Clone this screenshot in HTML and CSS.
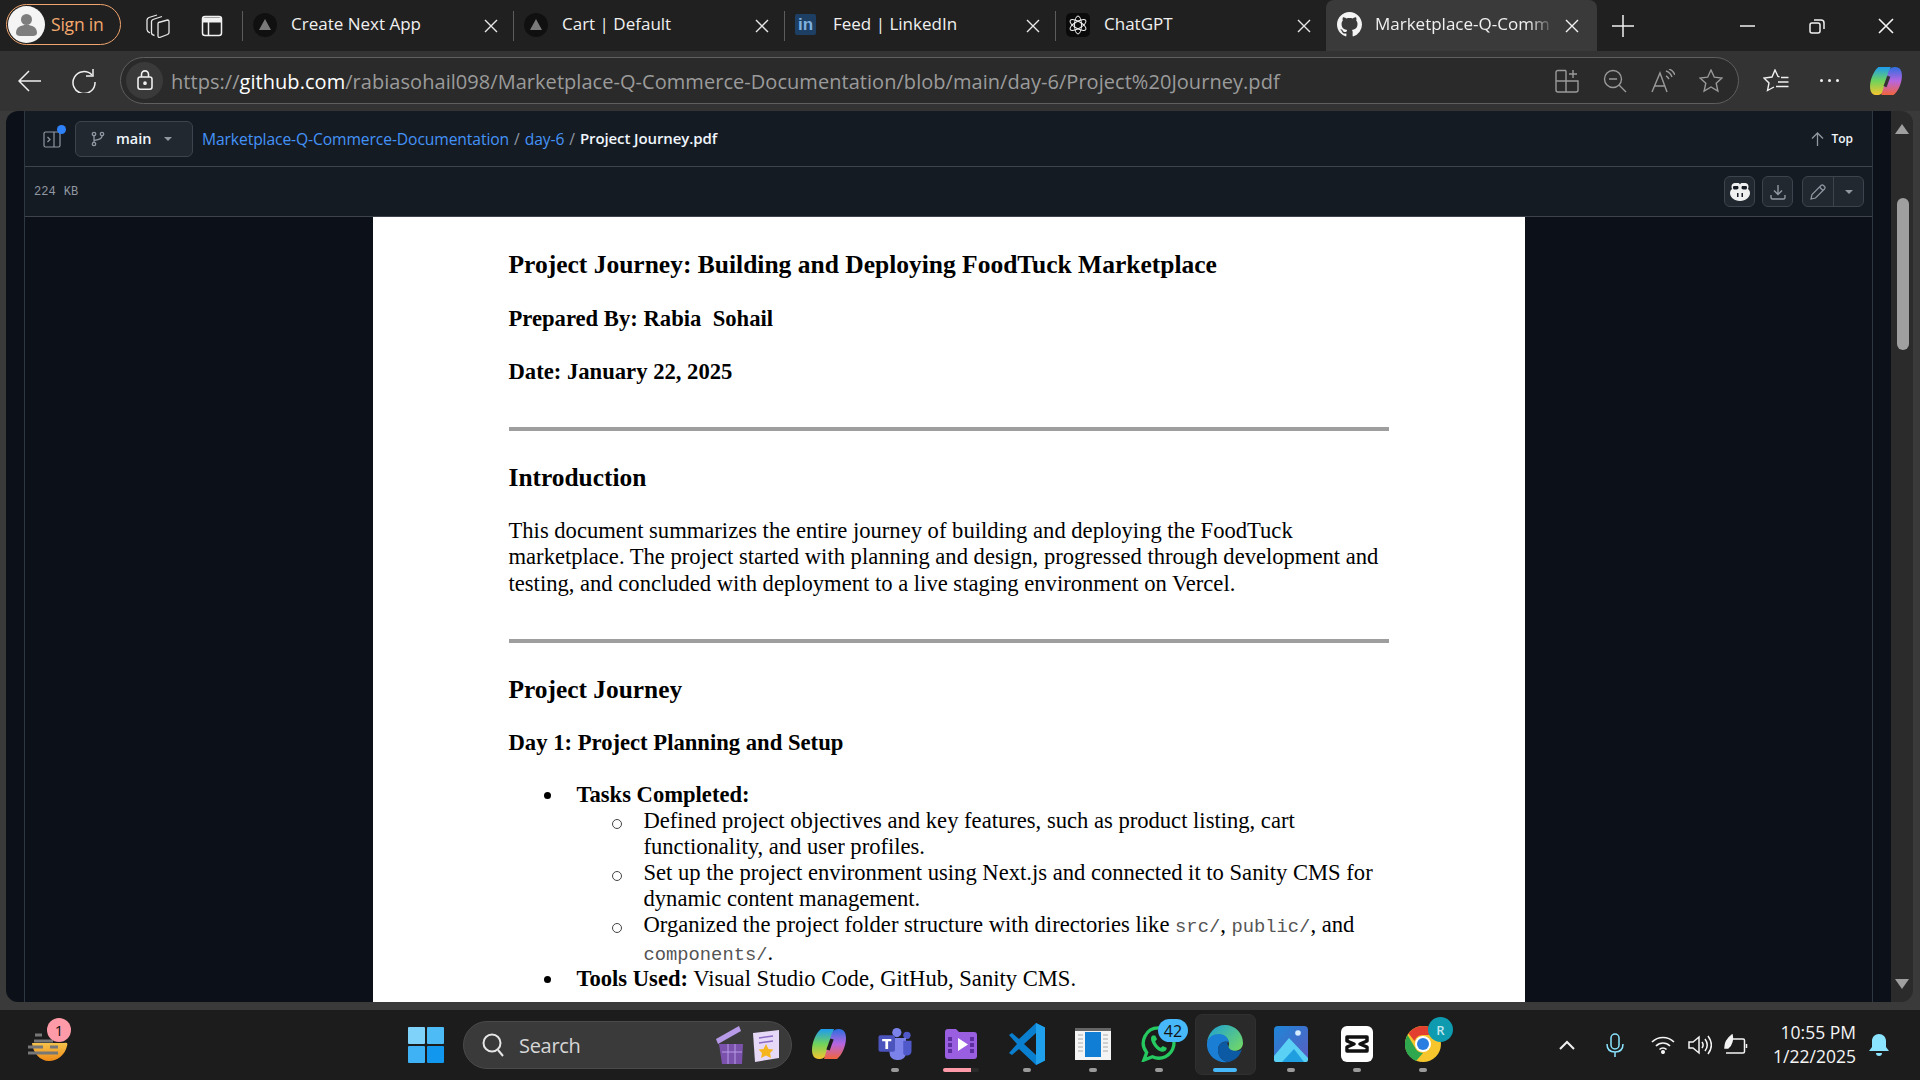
FILE: index.html
```html
<!DOCTYPE html>
<html>

	<head>
		<meta charset="UTF-8">
		<title>Project Journey.pdf</title>
		<link rel="stylesheet" href="styles.css">
	</head>

	<body>
		<svg class="defs" width="0" height="0">
			<defs>
				<linearGradient id="copilotA" x1="0" y1="0" x2="0" y2="1">
					<stop offset="0" stop-color="#1d9bf0" />
					<stop offset="0.5" stop-color="#6fd35a" />
					<stop offset="1" stop-color="#f7c52f" />
				</linearGradient>
				<linearGradient id="copilotB" x1="0" y1="0" x2="0" y2="1">
					<stop offset="0" stop-color="#2b6fe0" />
					<stop offset="0.5" stop-color="#b765e0" />
					<stop offset="1" stop-color="#f2643c" />
				</linearGradient>
				<linearGradient id="edgeA" x1="0" y1="0" x2="1" y2="0.8">
					<stop offset="0" stop-color="#1b9ed8" />
					<stop offset="1" stop-color="#6fd66a" />
				</linearGradient>
				<linearGradient id="photoA" x1="0" y1="0" x2="1" y2="1">
					<stop offset="0" stop-color="#1e86d8" />
					<stop offset="1" stop-color="#5b5cc0" />
				</linearGradient>
				<linearGradient id="bowl" x1="0" y1="0" x2="0" y2="1">
					<stop offset="0" stop-color="#f5c44c" />
					<stop offset="1" stop-color="#ee8a17" />
				</linearGradient>
			</defs>
		</svg>

		<div class="tabstrip">
			<div class="signin">
				<span class="avatar">
					<svg width="37" height="37" viewBox="0 0 37 37"><circle cx="18.5" cy="13.5" r="5.5" fill="#7d7d7d" /><path d="M8 27c0-6 5-8 10.500-8S29 21 29 27c0 2-2 3-4 3H12c-2 0-4-1-4-3z" fill="#7d7d7d" /></svg>
				</span>
				<span class="signin-text">Sign in</span>
			</div>
			<svg class="strip-icon workspaces" width="24" height="24" viewBox="0 0 24 24" fill="none" stroke="#e6e6e6" stroke-width="1.300"><path d="M12.500 8.500L21.500 6c1 0 1.500.5 1.500 1.500v11c0 1-.5 1.500-1.500 2l-8 3c-1 0-1.500-.5-1.500-1.500V10c0-.7.200-1.200.500-1.500z" /><path d="M8.500 21.500C6.500 21 5.500 20 5.500 19V7.500C5.500 6.500 6 6 7 5.500L16 2.500" /><path d="M4 19C2 18 1 17 1 15.500V6c0-1.500 1-2 2-2.500L11 1" /></svg>
			<svg class="strip-icon sidebar-tabs" width="24" height="24" viewBox="0 0 24 24" fill="none" stroke="#f0f0f0" stroke-width="1.500"><rect x="2.500" y="2.500" width="19" height="19" rx="2.500" /><path d="M2.500 6h19" stroke-width="5" /><path d="M8.500 8v13.500" /></svg>

			<div class="tab">
				<span class="fav-circle"><i class="tri"></i></span>
				<span class="tab-title">Create Next App</span>
				<svg class="tab-close" width="14" height="14" viewBox="0 0 14 14"><path d="M1 1l12 12M13 1L1 13" stroke="#e8e8e8" stroke-width="1.400" /></svg>
			</div>
			<div class="tab">
				<span class="fav-circle"><i class="tri"></i></span>
				<span class="tab-title">Cart | Default</span>
				<svg class="tab-close" width="14" height="14" viewBox="0 0 14 14"><path d="M1 1l12 12M13 1L1 13" stroke="#e8e8e8" stroke-width="1.400" /></svg>
			</div>
			<div class="tab">
				<span class="fav-in">in</span>
				<span class="tab-title">Feed | LinkedIn</span>
				<svg class="tab-close" width="14" height="14" viewBox="0 0 14 14"><path d="M1 1l12 12M13 1L1 13" stroke="#e8e8e8" stroke-width="1.400" /></svg>
			</div>
			<div class="tab">
				<span class="fav-gpt">
					<svg width="20" height="20" viewBox="0 0 20 20" fill="none" stroke="#f2f2f2" stroke-width="1"><ellipse cx="10" cy="10" rx="3.500" ry="9" /><ellipse cx="10" cy="10" rx="3.500" ry="9" transform="rotate(60 10 10)" /><ellipse cx="10" cy="10" rx="3.500" ry="9" transform="rotate(120 10 10)" /></svg>
				</span>
				<span class="tab-title">ChatGPT</span>
				<svg class="tab-close" width="14" height="14" viewBox="0 0 14 14"><path d="M1 1l12 12M13 1L1 13" stroke="#e8e8e8" stroke-width="1.400" /></svg>
			</div>
			<div class="tab tab-active">
				<svg class="fav-gh" width="25" height="25" viewBox="0 0 16 16"><path fill="#f4f4f4" d="M8 0C3.580 0 0 3.580 0 8c0 3.540 2.290 6.530 5.470 7.590.4.070.55-.17.55-.38 0-.19-.01-.82-.01-1.490-2.010.37-2.530-.49-2.690-.94-.09-.23-.48-.94-.82-1.130-.28-.15-.68-.52-.01-.53.630-.01 1.080.58 1.230.82.720 1.210 1.870.87 2.330.66.070-.52.280-.87.510-1.070-1.780-.2-3.640-.89-3.640-3.950 0-.87.310-1.590.820-2.150-.08-.2-.36-1.020.08-2.120 0 0 .67-.21 2.200.82.640-.18 1.320-.27 2-.27s1.360.09 2 .27c1.530-1.040 2.200-.82 2.200-.82.440 1.100.160 1.920.080 2.120.510.560.820 1.270.820 2.150 0 3.070-1.870 3.750-3.650 3.950.290.250.540.730.540 1.480 0 1.070-.01 1.930-.01 2.200 0 .210.150.460.550.380A8.010 8.010 0 0016 8c0-4.420-3.580-8-8-8z" /></svg>
				<span class="tab-title tab-title-fade">Marketplace-Q-Comm</span>
				<svg class="tab-close" width="14" height="14" viewBox="0 0 14 14"><path d="M1 1l12 12M13 1L1 13" stroke="#f4f4f4" stroke-width="1.400" /></svg>
			</div>
			<svg class="new-tab" width="22" height="22" viewBox="0 0 22 22"><path d="M11 0v22M0 11h22" stroke="#f0f0f0" stroke-width="1.500" /></svg>

			<div class="win-controls">
				<div class="win-btn"><svg width="16" height="16" viewBox="0 0 16 16"><path d="M0 8h15" stroke="#f0f0f0" stroke-width="1.500" /></svg></div>
				<div class="win-btn"><svg width="16" height="16" viewBox="0 0 16 16" fill="none" stroke="#f0f0f0" stroke-width="1.500"><rect x="1" y="5" width="10" height="10" rx="2" /><path d="M5 2h7c1.500 0 3 1 3 3v6" /></svg></div>
				<div class="win-btn"><svg width="16" height="16" viewBox="0 0 16 16"><path d="M1 1l14 14M15 1L1 15" stroke="#f4f4f4" stroke-width="1.600" /></svg></div>
			</div>
		</div>

		<div class="toolbar">
			<svg class="tool-back" width="24" height="24" viewBox="0 0 24 24" fill="none" stroke="#f0f0f0" stroke-width="1.500"><path d="M23 12H1M11 2L1 12l10 10" /></svg>
			<svg class="tool-reload" width="24" height="24" viewBox="0 0 24 24" fill="none" stroke="#f0f0f0" stroke-width="1.500"><path d="M20 6a11 11 0 1 0 3 7" /><path d="M21 0v7h-7" /></svg>
			<div class="omnibox">
				<span class="lock">
					<svg width="18" height="21" viewBox="0 0 20 24" fill="none" stroke="#f0f0f0" stroke-width="1.800"><rect x="2" y="8" width="16" height="14" rx="2.500" /><path d="M6 8V5a4 4 0 0 1 8 0v3" /><circle cx="10" cy="15" r="1.200" fill="#f0f0f0" /></svg>
				</span>
				<span class="url">https://<b>github.com</b>/rabiasohail098/Marketplace-Q-Commerce-Documentation/blob/main/day-6/Project%20Journey.pdf</span>
				<div class="omni-icons">
					<svg width="24" height="24" viewBox="0 0 24 24" fill="none" stroke="#9a9a9a" stroke-width="1.400"><path d="M11 1.500H3a2 2 0 0 0-2 2V21a2 2 0 0 0 2 2h18a2 2 0 0 0 2-2V12H1M11 1.500V23M18 1v8M14 5h8" /></svg>
					<svg width="24" height="24" viewBox="0 0 24 24" fill="none" stroke="#9a9a9a" stroke-width="1.400"><circle cx="10" cy="10" r="8.500" /><path d="M16 16l7 7M6 10h8" /></svg>
					<svg width="24" height="24" viewBox="0 0 24 24" fill="none" stroke="#9a9a9a" stroke-width="1.400"><path d="M1 23L9 4l7 19M4 17h10" /><path d="M15 2c3 1 5 3 6 6M15 7c1.500.5 2 1.500 3 3M18 0c3 1 5 3.500 6 6" /></svg>
					<svg width="24" height="24" viewBox="0 0 24 24" fill="none" stroke="#9a9a9a" stroke-width="1.400"><path d="M12 1l3.300 7.200 7.700.8-5.800 5.200 1.700 7.800L12 18l-6.900 4 1.700-7.800L1 9l7.700-.8z" /></svg>
				</div>
			</div>
			<svg class="tool-favs" width="26" height="24" viewBox="0 0 26 24" fill="none" stroke="#f0f0f0" stroke-width="1.400"><path d="M16.500 7.800L15 7.500 12 1 9 8 1 9l5 5-1.500 7.500L11 18" /><path d="M18 8.500h7.500M15 13h10.500M13 17.500h12.500" /></svg>
			<div class="tool-dots"><i></i><i></i><i></i></div>
			<svg class="tool-copilot" width="32" height="30" viewBox="0 0 34 32"><path d="M9 1h13l-7 23c-1 4-3 7-7 7H7C2 31 0 27 0 22 0 14 4 5 9 1z" fill="url(#copilotA)" /><path d="M25 31H12l7-23c1-4 3-7 7-7h1c5 0 7 4 7 9 0 8-4 17-9 21z" fill="url(#copilotB)" /><path d="M20 11l-4 11" stroke="#333" stroke-width="3.500" /></svg>
		</div>

		<div class="content">
			<div class="page">
				<div class="file">
					<div class="file-head">
						<div class="side-toggle">
							<svg width="18" height="18" viewBox="0 0 18 18" fill="none" stroke="#9198a1" stroke-width="1.200"><rect x="1" y="2" width="16" height="15" rx="1.500" /><path d="M11 2v15M4.500 7l2.500 2.500L4.500 12" /></svg>
							<i class="side-dot"></i>
						</div>
						<div class="branch">
							<svg width="14" height="16" viewBox="0 0 14 16" fill="none" stroke="#9198a1" stroke-width="1.300"><circle cx="3" cy="3" r="1.700" /><circle cx="3" cy="13" r="1.700" /><circle cx="11" cy="3" r="1.700" /><path d="M3 5v6M11 5c0 3-3 3.500-8 4.500" /></svg>
							<span class="branch-name">main</span>
							<i class="caret"></i>
						</div>
						<div class="crumbs">
							<a>Marketplace-Q-Commerce-Documentation</a>
							<span class="crumb-sep">/</span>
							<a>day-6</a>
							<span class="crumb-sep">/</span>
							<strong>Project Journey.pdf</strong>
						</div>
						<div class="top-link">
							<svg width="13" height="14" viewBox="0 0 13 14" fill="none" stroke="#9198a1" stroke-width="1.300"><path d="M6.500 14V1M1 6.500L6.500 1 12 6.500" /></svg>
							<span>Top</span>
						</div>
					</div>
					<div class="file-bar">
						<span class="file-size">224 KB</span>
						<div class="file-actions">
							<div class="icon-btn">
								<svg width="20" height="18" viewBox="0 0 20 18"><path fill="#f0f0f0" d="M5 0h3c1 0 1.500.5 2 1.500C10.500.5 11 0 12 0h3c2 0 3.500 1.500 3.500 3.500 0 1-.2 2-.5 2.500 1 .8 2 2 2 4 0 4-4 8-10 8S0 14 0 10c0-2 1-3.200 2-4-.3-.5-.5-1.500-.5-2.500C1.500 1.500 3 0 5 0z" /><path fill="#151b23" d="M4 3h3.500c.5 0 1 .5 1 1.500S8 6.500 6.500 6.500H4C3.500 6.500 3 5.500 3 4.500S3.500 3 4 3zM12.500 3H16c.5 0 1 .5 1 1.500s-.5 2-1 2h-2.500C12 6.500 11.500 5.500 11.500 4.500S12 3 12.500 3zM7 10h1.500v4H7zM11.500 10H13v4h-1.500z" /></svg>
							</div>
							<div class="icon-btn">
								<svg width="16" height="16" viewBox="0 0 16 16" fill="none" stroke="#9198a1" stroke-width="1.400"><path d="M8 1v9M4 6.500L8 10.500l4-4M1 11v2.500c0 .8.700 1.500 1.500 1.500h11c.8 0 1.500-.7 1.500-1.500V11" /></svg>
							</div>
							<div class="edit-group">
								<div class="edit-pen">
									<svg width="16" height="16" viewBox="0 0 16 16" fill="none" stroke="#9198a1" stroke-width="1.200"><path d="M1 15l1-4.500L11 1.500c.8-.7 1.800-.7 2.500 0l1 1c.7.800.7 1.800 0 2.500L5.500 14z" /><path d="M9.500 3l3.500 3.500" /></svg>
								</div>
								<div class="edit-caret"><i class="caret"></i></div>
							</div>
						</div>
					</div>
					<div class="viewer">
						<div class="pdf">
							<h1 class="pdf-title">Project Journey: Building and Deploying FoodTuck Marketplace</h1>
							<p class="pdf-meta">Prepared By: Rabia&nbsp; Sohail</p>
							<p class="pdf-meta">Date: January 22, 2025</p>
							<hr class="pdf-rule">
							<h2 class="pdf-head">Introduction</h2>
							<p class="pdf-text">This document summarizes the entire journey of building and deploying the FoodTuck<br>marketplace. The project started with planning and design, progressed through development and<br>testing, and concluded with deployment to a live staging environment on Vercel.</p>
							<hr class="pdf-rule">
							<h2 class="pdf-head">Project Journey</h2>
							<p class="pdf-meta">Day 1: Project Planning and Setup</p>
							<ul class="pdf-list">
								<li><b>Tasks Completed:</b>
									<ul class="pdf-sublist">
										<li>Defined project objectives and key features, such as product listing, cart<br>functionality, and user profiles.</li>
										<li>Set up the project environment using Next.js and connected it to Sanity CMS for<br>dynamic content management.</li>
										<li>Organized the project folder structure with directories like <code>src/</code>, <code>public/</code>, and<br><code>components/</code>.</li>
									</ul>
								</li>
								<li class="pdf-tools"><b>Tools Used:</b> Visual Studio Code, GitHub, Sanity CMS.</li>
							</ul>
						</div>
					</div>
				</div>
			</div>
			<div class="scrollbar">
				<i class="scroll-up"></i>
				<i class="scroll-thumb"></i>
				<i class="scroll-down"></i>
			</div>
		</div>

		<div class="taskbar">
			<div class="widget">
				<svg width="44" height="44" viewBox="0 0 44 44"><path d="M6 20h32c3-1 4 0 3 3-2 9-10 15-18 15-9 0-16-8-17-18z" fill="url(#bowl)" /><path d="M9 12h7M8 18h19M2 24h15M24 24h8M2 30h30" stroke="#777" stroke-width="3" /></svg>
				<span class="badge badge-pink">1</span>
			</div>
			<div class="start">
				<svg width="36" height="36" viewBox="0 0 36 36"><rect width="17" height="17" rx="1" fill="#7fd3fb" /><rect x="19" width="17" height="17" rx="1" fill="#4dbcf6" /><rect y="19" width="17" height="17" rx="1" fill="#3fb2f5" /><rect x="19" y="19" width="17" height="17" rx="1" fill="#1198ee" /></svg>
			</div>
			<div class="search">
				<svg width="24" height="26" viewBox="0 0 24 26" fill="none" stroke="#e6e6e6" stroke-width="2"><circle cx="11" cy="11" r="8.500" /><path d="M17 18l5 6" /></svg>
				<span class="search-text">Search</span>
				<svg class="search-art" width="68" height="40" viewBox="0 0 68 40"><path d="M3 14L26 1l2 5L5 19z" fill="#b89be8" /><path d="M6 19h24l-1 20H9z" fill="#7b52ab" /><path d="M9 27h20M15 19v20M22 19v20" stroke="#b89be8" /><path d="M40 8l26-3v28l-24 4z" fill="#e6d9f7" /><path d="M46 13l14-2M46 18l14-2" stroke="#8d6bc4" stroke-width="1.500" /><path d="M53 19l2.500 5 5 .5-3.500 3.500 1 5-5-2.500-5 2.500 1-5-3.500-3.500 5-.5z" fill="#f5b51e" /></svg>
			</div>
			<div class="apps">
				<div class="app">
					<svg width="34" height="32" viewBox="0 0 34 32"><path d="M9 1h13l-7 23c-1 4-3 7-7 7H7C2 31 0 27 0 22 0 14 4 5 9 1z" fill="url(#copilotA)" /><path d="M25 31H12l7-23c1-4 3-7 7-7h1c5 0 7 4 7 9 0 8-4 17-9 21z" fill="url(#copilotB)" /><path d="M20 11l-4 11" stroke="#1c1c1c" stroke-width="3.500" /></svg>
				</div>
				<div class="app app-open">
					<svg width="36" height="33" viewBox="0 0 36 36"><circle cx="20" cy="5" r="5" fill="#7b83eb" /><circle cx="31" cy="8" r="4" fill="#5059c9" /><path d="M12 11h18v16a8 8 0 0 1-8 8h-2a8 8 0 0 1-8-8z" fill="#7b83eb" /><path d="M27 14h9v11a5 5 0 0 1-9 3z" fill="#5059c9" /><rect y="8" width="18" height="18" rx="2" fill="#4b53bc" /><path d="M4 12h10v2.500h-3.500V23h-3v-8.500H4z" fill="#fff" /></svg>
				</div>
				<div class="app app-running">
					<svg width="32" height="30" viewBox="0 0 32 30"><path d="M0 3a3 3 0 0 1 3-3h8l3 3h15a3 3 0 0 1 3 3v21a3 3 0 0 1-3 3H3a3 3 0 0 1-3-3z" fill="#9a5fe0" /><path d="M13 9l10 6.500L13 22z" fill="#fff" /><path d="M3 8h4v4H3zM3 14h4v4H3zM3 20h4v4H3zM25 8h4v4h-4zM25 14h4v4h-4zM25 20h4v4h-4z" fill="#5d2f9e" /></svg>
				</div>
				<div class="app app-open">
					<svg width="36" height="42" viewBox="0 0 36 42"><path d="M27 0l9 4.500v33L27 42 10 26l-7 6-3-2 8-9-8-9 3-2 7 6z" fill="#0a7fd0" /><path d="M27 10L15 21l12 11z" fill="#1c1c1c" /><path d="M27 0l9 4.500v33L27 42z" fill="#1fa0ec" /></svg>
				</div>
				<div class="app app-open">
					<svg width="36" height="32" viewBox="0 0 36 32"><rect width="36" height="32" fill="#f4f4f4" /><rect width="36" height="3" fill="#666" /><rect x="10" y="4" width="16" height="25" fill="#0f7ed4" /><path d="M3 7h5M3 11h5M3 15h5M3 19h5M3 23h5M28 7h5M28 11h5M28 15h5M28 19h5M28 23h5" stroke="#cfcfcf" stroke-width="2" /></svg>
				</div>
				<div class="app app-open">
					<svg width="36" height="36" viewBox="0 0 36 38" fill="none"><path d="M18 2a16 16 0 1 1-7 30.500L2 36l3-8A16 16 0 0 1 18 2z" stroke="#25c95f" stroke-width="3.500" /><path d="M11 10c-2 2-2 5 1 10s8 8 11 7c2-.5 3.500-2 3-4l-4-2-2 2c-2-.5-5-4-6-7l2-2-2-4z" fill="#25c95f" /></svg>
					<span class="badge badge-blue">42</span>
				</div>
				<div class="app app-active">
					<svg width="36" height="38" viewBox="0 0 36 38"><path d="M18 0c10 0 18 8 18 18 0 5-4 8-9 8-4 0-6-1-6-3 0-1 1-2 1-4 0-5-4-9-10-9S1 14 0 18C1 8 8 0 18 0z" fill="url(#edgeA)" /><path d="M0 18c1-6 6-9 12-9 5 0 9 3 10 8-6-2-11 2-11 8 0 6 4 11 10 12C10 39-1 30 0 18z" fill="#1a7fd4" /><path d="M21 37c-6-1-10-6-10-12 0-5 4-9 10-8-1 1-1 2 0 3 0 3 3 6 8 6 3 0 5-1 6-2-2 7-7 12-14 13z" fill="#0c59a4" /></svg>
				</div>
				<div class="app app-open">
					<svg width="34" height="36" viewBox="0 0 34 36"><rect width="34" height="36" rx="4" fill="url(#photoA)" /><circle cx="24" cy="7" r="2.800" fill="#d8ecff" /><path d="M0 30L15 12l19 20v2a2 2 0 0 1-2 2H2a2 2 0 0 1-2-2z" fill="#5ad0f5" /><path d="M8 36l12-13 10 13z" fill="#1f9fe0" /></svg>
				</div>
				<div class="app app-open">
					<svg width="32" height="36" viewBox="0 0 32 36"><rect width="32" height="36" rx="6" fill="#fff" /><path d="M6 11h20v4l-7 3 7 3v4H6v-4l7-3-7-3z" fill="none" stroke="#111" stroke-width="3.500" stroke-linejoin="round" /></svg>
				</div>
				<div class="app app-open">
					<svg width="36" height="36" viewBox="0 0 36 36"><circle cx="18" cy="18" r="18" fill="#f7c62d" /><path d="M18 0a18 18 0 0 1 15.600 9H18a9 9 0 0 0-8.500 6L3.500 7.500A18 18 0 0 1 18 0z" fill="#e23f30" /><path d="M2.500 9L10 21.500a9 9 0 0 0 8 5.500l-7 8A18 18 0 0 1 2.500 9z" fill="#2fa74f" /><circle cx="18" cy="18" r="8" fill="#fff" /><circle cx="18" cy="18" r="6" fill="#2a7de1" /></svg>
					<span class="badge badge-teal">R</span>
				</div>
			</div>
			<div class="tray">
				<svg class="tray-chevron" width="16" height="10" viewBox="0 0 16 10" fill="none" stroke="#f0f0f0" stroke-width="2"><path d="M1 9l7-7 7 7" /></svg>
				<svg class="tray-mic" width="18" height="24" viewBox="0 0 18 24" fill="none" stroke="#8ae3ff" stroke-width="1.500"><rect x="5" y="1" width="8" height="15" rx="4" /><path d="M1 11c0 5 3 8 8 8s8-3 8-8M9 19v5" /></svg>
				<svg class="tray-wifi" width="24" height="18" viewBox="0 0 24 18" fill="none" stroke="#f4f4f4" stroke-width="1.700"><path d="M1 6c6-6 16-6 22 0M5 10c4-4 10-4 14 0M8.500 13.500c2-2 5-2 7 0" /><circle cx="12" cy="16" r="1.200" fill="#f4f4f4" /></svg>
				<svg class="tray-vol" width="24" height="20" viewBox="0 0 24 20" fill="none" stroke="#f4f4f4" stroke-width="1.500"><path d="M1 7v6h4l6 5V2L5 7z" /><path d="M14 7c1.500 2 1.500 4 0 6M17 4c3 4 3 8 0 12M20 1c4.500 6 4.500 12 0 18" /></svg>
				<svg class="tray-batt" width="24" height="22" viewBox="0 0 24 22" fill="none" stroke="#f4f4f4" stroke-width="1.500"><path d="M9 5h10c1 0 1.500.7 1.500 1.500v11c0 1-.5 1.500-1.500 1.500H2" /><path d="M22.500 10v4" /><path d="M1 14C1 7 4 4 8 1c1 4 0 10-4 13z" fill="#f4f4f4" /></svg>
				<div class="clock">
					<span>10:55 PM</span>
					<span>1/22/2025</span>
				</div>
				<svg class="tray-bell" width="20" height="24" viewBox="0 0 20 24"><path d="M10 1c4 0 7 3 7 7v6l3 4H0l3-4V8c0-4 3-7 7-7z" fill="#8ae3ff" /><path d="M7 20h6c0 2-1 3-3 3s-3-1-3-3z" fill="#8ae3ff" /></svg>
			</div>
		</div>
	</body>

</html>
```
FILE: styles.css
```css
* {
	margin: 0;
	padding: 0;
	box-sizing: border-box;
}

html,
body {
	width: 1920px;
	height: 1080px;
	overflow: hidden;
}

body {
	display: flex;
	flex-direction: column;
	background: #1c1c1c;
	font-family: "Open Sans", "Liberation Sans", sans-serif;
	color: #f0f0f0;
}

.defs {
	position: absolute;
}

/* tab strip */
.tabstrip {
	display: flex;
	align-items: center;
	height: 51px;
	flex: none;
	background: #202020;
}

.signin {
	display: flex;
	align-items: center;
	width: 115px;
	height: 41px;
	margin-left: 6px;
	padding-left: 1px;
	margin-top: -3px;
	border: 1.5px solid #f0a56e;
	border-radius: 21px;
}

.avatar {
	display: block;
	width: 37px;
	height: 37px;
	border-radius: 50%;
	background: #f4f4f4;
	overflow: hidden;
}

.signin-text {
	margin-left: 6px;
	font-size: 17.500px;
	letter-spacing: -0.2px;
	color: #f4a96f;
}

.strip-icon {
	flex: none;
}

.workspaces {
	margin-left: 25px;
}

.sidebar-tabs {
	margin-left: 30px;
	margin-right: 18px;
}

.tab {
	display: flex;
	align-items: center;
	flex: none;
	position: relative;
	width: 271px;
	height: 51px;
	padding-left: 11px;
	padding-right: 15px;
	font-size: 17px;
}

.tab::before {
	content: "";
	position: absolute;
	left: 0;
	top: 11px;
	height: 30px;
	width: 1px;
	background: #5c5c5c;
}

.tab-active {
	background: #3a3a3a;
	border-radius: 8px 8px 0 0;
}

.tab-active::before {
	display: none;
}

.tab-title {
	flex: 1;
	min-width: 0;
	margin-left: 14px;
	white-space: nowrap;
	margin-top: -4px;
}

.tab-title-fade {
	flex: none;
	width: 180px;
	overflow: hidden;
	-webkit-mask-image: linear-gradient(to right, #000 85%, transparent 100%);
	mask-image: linear-gradient(to right, #000 85%, transparent 100%);
}

.tab-close {
	flex: none;
	margin-left: 10px;
}

.fav-circle {
	display: flex;
	align-items: center;
	justify-content: center;
	flex: none;
	width: 24px;
	height: 24px;
	border-radius: 50%;
	background: #101010;
	margin-top: -2px;
}

.tri {
	display: block;
	width: 0;
	height: 0;
	border-left: 6px solid transparent;
	border-right: 6px solid transparent;
	border-bottom: 11px solid #7a7a7a;
}

.fav-in {
	display: flex;
	align-items: flex-end;
	justify-content: center;
	flex: none;
	width: 21px;
	height: 21px;
	background: #1d3f63;
	color: #7fb1e0;
	font-family: "Liberation Sans", sans-serif;
	font-weight: 700;
	font-size: 17px;
	line-height: 21px;
	margin-top: -2px;
	margin-right: 3px;
	border-radius: 2px;
}

.fav-gpt {
	display: flex;
	align-items: center;
	justify-content: center;
	flex: none;
	width: 24px;
	height: 24px;
	border-radius: 5px;
	background: #0a0a0a;
	margin-top: -2px;
}

.fav-gh {
	flex: none;
	margin-top: -2px;
}

.tab-active .tab-title {
	margin-left: 13px;
}

.new-tab {
	flex: none;
	margin-left: 15px;
}

.win-controls {
	display: flex;
	margin-left: auto;
}

.win-btn {
	display: flex;
	align-items: center;
	justify-content: center;
	width: 69px;
	height: 51px;
}

/* toolbar */
.toolbar {
	display: flex;
	align-items: center;
	flex: none;
	height: 60px;
	padding-bottom: 1px;
	background: #333333;
}

.tool-back {
	margin-left: 18px;
}

.tool-reload {
	margin-left: 30px;
}

.omnibox {
	display: flex;
	align-items: center;
	width: 1619px;
	height: 47px;
	margin-left: 24px;
	padding-left: 5px;
	padding-right: 15px;
	border: 1.5px solid #5f5f5f;
	border-radius: 24px;
	background: #2a2a2a;
}

.lock {
	display: flex;
	align-items: center;
	justify-content: center;
	flex: none;
	width: 37px;
	height: 37px;
	border-radius: 50%;
	background: #3a3a3a;
}

.url {
	flex: 1;
	margin-left: 8px;
	padding-top: 2px;
	font-size: 20px;
	letter-spacing: 0.045px;
	white-space: nowrap;
	color: #9b9b9b;
}

.url b {
	font-weight: 400;
	color: #ffffff;
}

.omni-icons {
	display: flex;
	gap: 24px;
}

.tool-favs {
	margin-left: 24px;
}

.tool-dots {
	display: flex;
	gap: 5px;
	margin-left: 31px;
}

.tool-dots i {
	display: block;
	width: 3px;
	height: 3px;
	border-radius: 50%;
	background: #f0f0f0;
}

.tool-copilot {
	margin-left: 31px;
}

/* page */
.content {
	display: flex;
	flex: 1;
	min-height: 0;
	padding-left: 6px;
	padding-right: 7px;
	padding-bottom: 8px;
	background: #3a3a3a;
}

.page {
	flex: 1;
	min-width: 0;
	padding: 0 18px;
	background: #0c1018;
	border-top-left-radius: 12px;
	border-bottom-left-radius: 12px;
	overflow: hidden;
}

.file {
	display: flex;
	flex-direction: column;
	height: 100%;
	border-left: 1px solid #2f3742;
	border-right: 1px solid #2f3742;
}

.file-head {
	display: flex;
	align-items: center;
	flex: none;
	height: 56px;
	padding-left: 18px;
	padding-right: 19px;
	background: #151b23;
	border-bottom: 1px solid #3d444d;
}

.side-toggle {
	position: relative;
	width: 18px;
	height: 18px;
}

.side-dot {
	position: absolute;
	top: -5px;
	right: -5px;
	width: 9px;
	height: 9px;
	border-radius: 50%;
	background: #2f81f7;
}

.branch {
	display: flex;
	align-items: center;
	width: 118px;
	height: 36px;
	margin-left: 14px;
	padding-left: 15px;
	border: 1px solid #3d444d;
	border-radius: 6px;
	background: #212830;
}

.branch-name {
	margin-left: 11px;
	font-size: 14.500px;
	font-weight: 600;
	color: #f0f6fc;
}

.caret {
	display: block;
	width: 0;
	height: 0;
	border-left: 4px solid transparent;
	border-right: 4px solid transparent;
	border-top: 4px solid #9198a1;
}

.branch .caret {
	margin-left: 12px;
}

.crumbs {
	display: flex;
	gap: 5px;
	margin-left: 9px;
	font-size: 15.650px;
	letter-spacing: -0.1px;
}

.crumbs a {
	color: #4493f8;
}

.crumb-sep {
	color: #9198a1;
}

.crumbs strong {
	font-size: 15px;
	font-weight: 600;
	color: #f0f6fc;
}

.top-link {
	display: flex;
	align-items: center;
	gap: 7px;
	margin-left: auto;
	font-size: 12px;
	font-weight: 600;
	color: #f0f6fc;
}

.file-bar {
	display: flex;
	align-items: center;
	flex: none;
	height: 50px;
	padding-left: 9px;
	padding-right: 8px;
	background: #151b23;
	border-bottom: 1px solid #3d444d;
}

.file-size {
	font-family: "Liberation Mono", monospace;
	font-size: 12px;
	color: #9198a1;
	word-spacing: 1px;
}

.file-actions {
	display: flex;
	align-items: center;
	gap: 7px;
	margin-left: auto;
}

.icon-btn {
	display: flex;
	align-items: center;
	justify-content: center;
	width: 31px;
	height: 31px;
	border: 1px solid #3d444d;
	border-radius: 6px;
	background: #212830;
}

.edit-group {
	display: flex;
	width: 62px;
	height: 31px;
	margin-left: 2px;
	border: 1px solid #3d444d;
	border-radius: 6px;
	background: #212830;
}

.edit-pen {
	display: flex;
	align-items: center;
	justify-content: center;
	width: 31px;
	border-right: 1px solid #3d444d;
}

.edit-caret {
	display: flex;
	align-items: center;
	justify-content: center;
	flex: 1;
}

.viewer {
	flex: 1;
	min-height: 0;
	overflow: hidden;
}

.pdf {
	width: 1152px;
	height: 100%;
	margin: 0 auto;
	padding: 34px 136px 0 136px;
	background: #ffffff;
	color: #000000;
	font-family: "Liberation Serif", serif;
	overflow: hidden;
}

.pdf-title {
	font-size: 25.500px;
	line-height: 28px;
	font-weight: 700;
}

.pdf-meta {
	margin-top: 27px;
	font-size: 22.650px;
	line-height: 26px;
	font-weight: 700;
}

.pdf-rule {
	height: 4px;
	margin-top: 42px;
	border: 0;
	background: #9e9e9e;
}

.pdf-head {
	margin-top: 32px;
	font-size: 25.400px;
	line-height: 28px;
	font-weight: 700;
}

.pdf-text {
	margin-top: 27px;
	font-size: 22.600px;
	line-height: 26.300px;
	white-space: nowrap;
}

.pdf-list {
	list-style: none;
	margin-top: 26px;
	padding-left: 68px;
	font-size: 22.600px;
	line-height: 26px;
	white-space: nowrap;
}

.pdf-list li {
	position: relative;
}

.pdf-list > li::before {
	content: "";
	position: absolute;
	left: -33px;
	top: 10px;
	width: 7px;
	height: 7px;
	border-radius: 50%;
	background: #000000;
}

.pdf-tools {
	margin-top: -2px;
}

.pdf-sublist {
	list-style: none;
	padding-left: 67px;
}

.pdf-sublist > li::before {
	content: "";
	position: absolute;
	left: -32px;
	top: 11px;
	width: 8px;
	height: 8px;
	border: 1px solid #444444;
	border-radius: 50%;
}

.pdf-list code {
	font-family: "Liberation Mono", monospace;
	font-size: 18.800px;
	color: #555555;
}

/* scrollbar */
.scrollbar {
	position: relative;
	flex: none;
	width: 22px;
	background: #2b2b2b;
	border-top-right-radius: 12px;
	border-bottom-right-radius: 12px;
}

.scroll-up,
.scroll-down {
	position: absolute;
	left: 4px;
	width: 0;
	height: 0;
	border-left: 7px solid transparent;
	border-right: 7px solid transparent;
}

.scroll-up {
	top: 13px;
	border-bottom: 10px solid #9f9f9f;
}

.scroll-down {
	bottom: 13px;
	border-top: 10px solid #9f9f9f;
}

.scroll-thumb {
	position: absolute;
	left: 6px;
	top: 87px;
	width: 12px;
	height: 152px;
	border-radius: 6px;
	background: #9f9f9f;
}

/* taskbar */
.taskbar {
	display: flex;
	align-items: center;
	flex: none;
	height: 70px;
	background: #1c1c1c;
}

.widget {
	position: relative;
	flex: none;
	width: 403px;
	height: 44px;
	padding-left: 26px;
}

.badge {
	position: absolute;
	display: flex;
	align-items: center;
	justify-content: center;
	border-radius: 50%;
	color: #111111;
}

.badge-pink {
	left: 47px;
	top: -5px;
	width: 24px;
	height: 24px;
	background: #ff9aa8;
	font-size: 15px;
}

.badge-blue {
	left: 32px;
	top: 4px;
	width: 30px;
	height: 23px;
	border-radius: 12px;
	background: #47b8fa;
	font-size: 16px;
}

.badge-teal {
	left: 38px;
	top: 2px;
	width: 25px;
	height: 25px;
	background: #0e9bb0;
	color: #bfe6ec;
	font-size: 13px;
	font-weight: 600;
}

.start {
	display: flex;
	flex: none;
	width: 44px;
	margin-right: 16px;
	padding-left: 5px;
}

.search {
	display: flex;
	align-items: center;
	flex: none;
	width: 329px;
	height: 48px;
	padding-left: 17px;
	padding-right: 10px;
	border: 1.5px solid #4a4a4a;
	border-radius: 24px;
	background: #3a3a3a;
}

.search-text {
	flex: 1;
	margin-left: 14px;
	font-size: 20px;
	letter-spacing: -0.3px;
	color: #d6d6d6;
}

.apps {
	display: flex;
	flex: none;
	margin-left: 4px;
}

.app {
	position: relative;
	display: flex;
	align-items: center;
	justify-content: center;
	width: 66px;
	height: 60px;
	padding-bottom: 2px;
}

.app-open::after,
.app-running::after,
.app-active::after {
	content: "";
	position: absolute;
	bottom: 3px;
	left: 29px;
	width: 8px;
	height: 4px;
	border-radius: 2px;
	background: #9a9a9a;
}

.app-running::after {
	left: 15px;
	width: 36px;
	background: linear-gradient(to right, #ff9aa8 28px, #2a2a2a 28px);
}

.app-active::before {
	content: "";
	position: absolute;
	left: 3px;
	top: -1px;
	width: 59px;
	height: 59px;
	border: 1px solid #303030;
	border-radius: 7px;
	background: #2a2a2a;
}

.app-active svg {
	position: relative;
}

.app-active::after {
	left: 21px;
	width: 24px;
	background: #47b8fa;
}

.tray {
	display: flex;
	align-items: center;
	flex: 1;
	height: 100%;
	position: relative;
}

.tray-chevron {
	margin-left: 103px;
}

.tray-mic {
	margin-left: 31px;
}

.tray-wifi {
	margin-left: 27px;
}

.tray-vol {
	margin-left: 13px;
}

.tray-batt {
	margin-left: 12px;
}

.clock {
	display: flex;
	flex-direction: column;
	align-items: flex-end;
	width: 100px;
	margin-left: 8px;
	margin-top: -2px;
	font-size: 17.500px;
	line-height: 24px;
	color: #f4f4f4;
}

.tray-bell {
	margin-left: 13px;
}
```
